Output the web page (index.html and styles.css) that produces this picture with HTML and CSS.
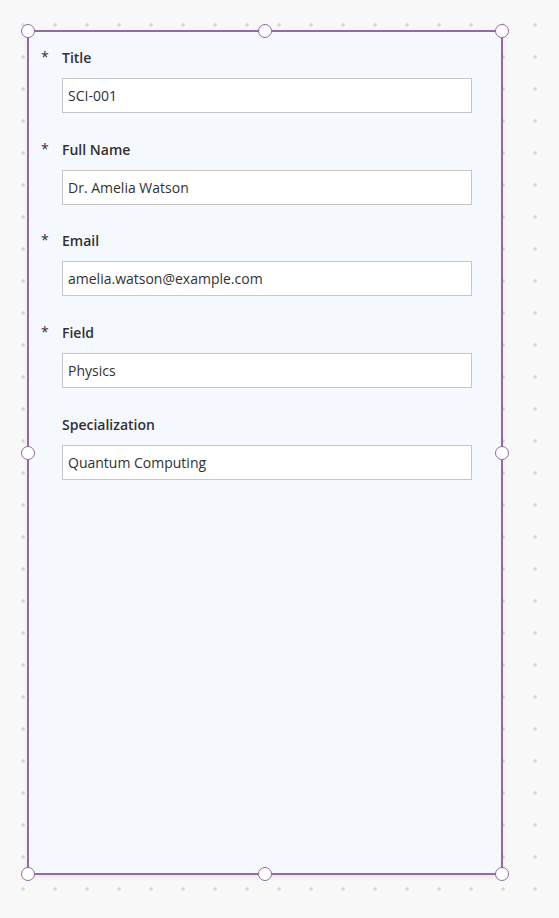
FILE: index.html
```html
<!DOCTYPE html>
<html lang="en">
<head>
<meta charset="utf-8">
<title>Scientist form</title>
<link rel="stylesheet" href="styles.css">
</head>
<body>
<div class="canvas">
  <div class="card">
    <div class="field">
      <span class="req">*</span>
      <label class="label">Title</label>
      <div class="input">SCI-001</div>
    </div>
    <div class="field">
      <span class="req">*</span>
      <label class="label">Full Name</label>
      <div class="input">Dr. Amelia Watson</div>
    </div>
    <div class="field">
      <span class="req">*</span>
      <label class="label">Email</label>
      <div class="input">amelia.watson@example.com</div>
    </div>
    <div class="field">
      <span class="req">*</span>
      <label class="label">Field</label>
      <div class="input">Physics</div>
    </div>
    <div class="field">
      <span class="req"></span>
      <label class="label">Specialization</label>
      <div class="input">Quantum Computing</div>
    </div>

    <span class="handle h-tl"></span>
    <span class="handle h-tc"></span>
    <span class="handle h-tr"></span>
    <span class="handle h-ml"></span>
    <span class="handle h-mr"></span>
    <span class="handle h-bl"></span>
    <span class="handle h-bc"></span>
    <span class="handle h-br"></span>
  </div>
</div>
</body>
</html>
```

FILE: styles.css
```css
html, body {
  margin: 0;
  padding: 0;
}

body {
  width: 559px;
  height: 918px;
  overflow: hidden;
  background-color: #f8f8f8;
  background-image: radial-gradient(circle at 16px 16px, #d8d8d8 0, #d8d8d8 1.3px, transparent 2px);
  background-size: 32px 32px;
  background-position: 7px 9px;
  font-family: "Open Sans", "Noto Sans", sans-serif;
  color: #323130;
}

.canvas {
  padding: 30px 0 0 27px;
}

.card {
  position: relative;
  box-sizing: border-box;
  width: 476px;
  height: 845px;
  border: 2px solid #946aa0;
  background: #f5f8fd;
  box-shadow: 0 2px 5px rgba(0, 0, 0, 0.07);
  padding-top: 16px;
}

.field {
  display: grid;
  grid-template-columns: 21px 410px;
  row-gap: 10px;
  padding-left: 12px;
  margin-bottom: 26.7px;
}

.req {
  grid-column: 1;
  grid-row: 1;
  font-size: 14px;
  line-height: 18px;
  font-weight: 400;
  color: #323130;
}

.label {
  grid-column: 2;
  grid-row: 1;
  font-size: 14px;
  line-height: 20px;
  font-weight: 600;
  color: #323130;
}

.input {
  grid-column: 2;
  grid-row: 2;
  box-sizing: border-box;
  height: 35px;
  border: 1px solid #c8c6c4;
  background: #ffffff;
  padding: 0 5px;
  font-size: 14px;
  line-height: 33px;
  color: #323130;
  white-space: nowrap;
}

.handle {
  position: absolute;
  box-sizing: border-box;
  width: 14px;
  height: 14px;
  border: 1.6px solid #946aa0;
  border-radius: 50%;
  background: #ffffff;
}

.h-tl { left: -8px; top: -8px; }
.h-tc { left: calc(50% - 7px); top: -8px; }
.h-tr { right: -8px; top: -8px; }
.h-ml { left: -8px; top: calc(50% - 7px); }
.h-mr { right: -8px; top: calc(50% - 7px); }
.h-bl { left: -8px; bottom: -8px; }
.h-bc { left: calc(50% - 7px); bottom: -8px; }
.h-br { right: -8px; bottom: -8px; }
```
